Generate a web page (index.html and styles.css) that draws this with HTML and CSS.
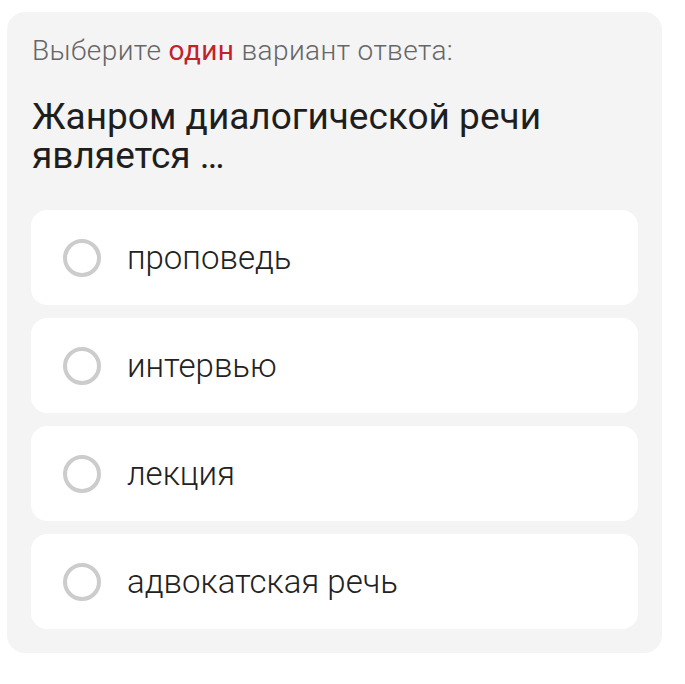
FILE: index.html
```html
<!DOCTYPE html>
<html lang="ru">
<head>
  <meta charset="UTF-8" />
  <meta name="viewport" content="width=device-width, initial-scale=1.0"/>
  <title>Тест</title>
  <link rel="stylesheet" href="styles.css">
</head>
<body>
  <div class="quiz-card">
    <p class="quiz-hint">Выберите <span class="accent">один</span> вариант ответа:</p>
    <h2 class="quiz-question">Жанром диалогической речи является …</h2>

    <div class="answers">
      <label class="answer">
        <span class="radio"></span>
        <span class="answer-text">проповедь</span>
      </label>
      <label class="answer">
        <span class="radio"></span>
        <span class="answer-text">интервью</span>
      </label>
      <label class="answer">
        <span class="radio"></span>
        <span class="answer-text">лекция</span>
      </label>
      <label class="answer">
        <span class="radio"></span>
        <span class="answer-text">адвокатская речь</span>
      </label>
    </div>
  </div>
</body>
</html>
```

FILE: styles.css
```css
body {
  margin: 0;
  background-color: #fff;
  font-family: Roboto, 'Noto Sans', sans-serif;
}

.quiz-card {
  margin: 12px 0 0 7px;
  width: 655px;
  box-sizing: border-box;
  padding: 22px 24px 24px 24px;
  background-color: #f4f4f4;
  border-radius: 18px;
}

.quiz-hint {
  margin: 0 0 0 1px;
  font-size: 28px;
  font-weight: 300;
  color: #666;
  line-height: 34px;
  letter-spacing: 0.4px;
}

.quiz-hint .accent {
  color: #c4202c;
  font-weight: 400;
}

.quiz-question {
  margin: 29px 0 0 1px;
  font-size: 37px;
  font-weight: 400;
  color: #1e1e1e;
  line-height: 39px;
  width: 580px;
}

.answers {
  margin-top: 35px;
  display: flex;
  flex-direction: column;
  gap: 13px;
}

.answer {
  display: flex;
  align-items: center;
  height: 95px;
  padding-left: 32px;
  background-color: #fff;
  border-radius: 16px;
  cursor: pointer;
}

.radio {
  width: 30px;
  height: 30px;
  border: 4px solid #cccccc;
  border-radius: 50%;
  flex-shrink: 0;
}

.answer-text {
  margin-left: 26px;
  font-size: 33px;
  font-weight: 300;
  color: #222;
}
```
